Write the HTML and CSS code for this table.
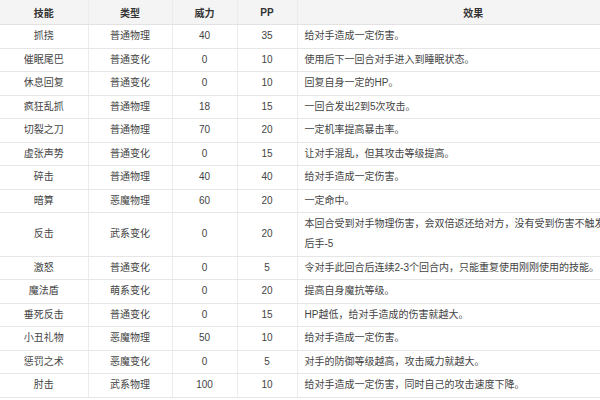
FILE: index.html
```html
<!DOCTYPE html>
<html lang="zh">
<head>
<meta charset="utf-8">
<link rel="stylesheet" href="styles.css">
</head>
<body>
<table class="skills">
  <colgroup>
    <col class="c-name"><col class="c-type"><col class="c-power"><col class="c-pp"><col class="c-effect">
  </colgroup>
  <thead>
    <tr><th>技能</th><th>类型</th><th>威力</th><th>PP</th><th>效果</th></tr>
  </thead>
  <tbody>
    <tr><td>抓挠</td><td>普通物理</td><td>40</td><td>35</td><td class="eff">给对手造成一定伤害。</td></tr>
    <tr><td>催眠尾巴</td><td>普通变化</td><td>0</td><td>10</td><td class="eff">使用后下一回合对手进入到睡眠状态。</td></tr>
    <tr><td>休息回复</td><td>普通变化</td><td>0</td><td>10</td><td class="eff">回复自身一定的HP。</td></tr>
    <tr><td>疯狂乱抓</td><td>普通物理</td><td>18</td><td>15</td><td class="eff">一回合发出2到5次攻击。</td></tr>
    <tr><td>切裂之刀</td><td>普通物理</td><td>70</td><td>20</td><td class="eff">一定机率提高暴击率。</td></tr>
    <tr><td>虚张声势</td><td>普通变化</td><td>0</td><td>15</td><td class="eff">让对手混乱，但其攻击等级提高。</td></tr>
    <tr><td>碎击</td><td>普通物理</td><td>40</td><td>40</td><td class="eff">给对手造成一定伤害。</td></tr>
    <tr><td>暗算</td><td>恶魔物理</td><td>60</td><td>20</td><td class="eff">一定命中。</td></tr>
    <tr><td>反击</td><td>武系变化</td><td>0</td><td>20</td><td class="eff">本回合受到对手物理伤害，会双倍返还给对方，没有受到伤害不触发。<br>后手-5</td></tr>
    <tr><td>激怒</td><td>普通变化</td><td>0</td><td>5</td><td class="eff">令对手此回合后连续2-3个回合内，只能重复使用刚刚使用的技能。</td></tr>
    <tr><td>魔法盾</td><td>萌系变化</td><td>0</td><td>20</td><td class="eff">提高自身魔抗等级。</td></tr>
    <tr><td>垂死反击</td><td>普通变化</td><td>0</td><td>15</td><td class="eff">HP越低，给对手造成的伤害就越大。</td></tr>
    <tr><td>小丑礼物</td><td>恶魔物理</td><td>50</td><td>10</td><td class="eff">给对手造成一定伤害。</td></tr>
    <tr><td>惩罚之术</td><td>恶魔变化</td><td>0</td><td>5</td><td class="eff">对手的防御等级越高，攻击威力就越大。</td></tr>
    <tr><td>肘击</td><td>武系物理</td><td>100</td><td>10</td><td class="eff">给对手造成一定伤害，同时自己的攻击速度下降。</td></tr>
  </tbody>
</table>
</body>
</html>
```

FILE: styles.css
```css
html, body {
  margin: 0;
  padding: 0;
  background: #ffffff;
  overflow: hidden;
}

.skills {
  border-collapse: collapse;
  table-layout: fixed;
  width: 649px;
  font-family: "Liberation Sans", "Noto Sans CJK SC", sans-serif;
  font-size: 10px;
  color: #444;
}

.c-name { width: 88px; }
.c-type { width: 84px; }
.c-power { width: 65px; }
.c-pp { width: 60px; }
.c-effect { width: 352px; }

.skills th {
  height: 24px;
  padding: 0;
  background: #f4f4f4;
  font-weight: bold;
  color: #333;
  text-align: center;
  border-bottom: 1px solid #e2e2e2;
  border-left: 1px solid #ececec;
}

.skills td {
  padding: 1.25px 6px;
  line-height: 20px;
  text-align: center;
  border-bottom: 1px solid #e6e6e6;
  border-left: 1px solid #ececec;
  white-space: nowrap;
  overflow: hidden;
}

.skills th:first-child,
.skills td:first-child {
  border-left: none;
}

.skills td.eff {
  text-align: left;
  padding-left: 7px;
}
```
